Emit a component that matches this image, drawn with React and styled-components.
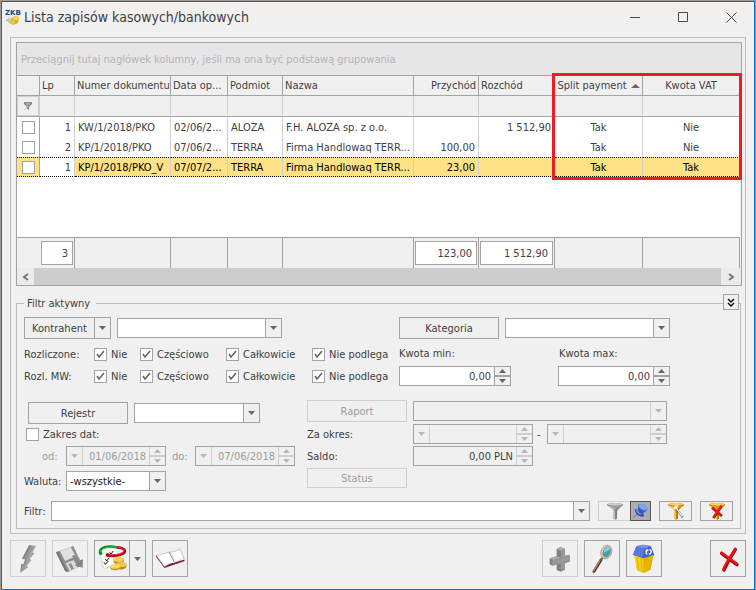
import React, { useState } from "react";
import styled, { createGlobalStyle } from "styled-components";

const colors = {
    frame: "#0072c0",
    face: "#f0f0f0",
    line: "#a3a3a3",
    softLine: "#cfcfcf",
    panelLine: "#bcbcbc",
    text: "#404040",
    disabled: "#9c9c9c",
    arrow: "#666666",
    arrowOff: "#b8b8b8",
    selected: "#ffe285",
    mark: "#ed1c24",
};

const GlobalStyle = createGlobalStyle`
    *, *::before, *::after {
        box-sizing: border-box;
    }

    body {
        margin: 0;
        padding: 1px 1px 0;
        background: #9b9b9b;
        color: ${colors.text};
        font-family: Tahoma, "DejaVu Sans Condensed", "Noto Sans", sans-serif;
        font-size: 11px;
        line-height: 15px;
    }

    button, input, select {
        margin: 0;
        padding: 0;
        border-radius: 0;
        color: inherit;
        font: inherit;
    }

    svg {
        display: block;
        flex: none;
    }
`;

/* window */

const Window = styled.div`
    padding: 0 8px 12px;
    border: 1px solid ${colors.frame};
    background: ${colors.face};
`;

const TitleBar = styled.header`
    display: flex;
    align-items: center;
    height: 35px;
    padding-bottom: 5px;
    margin-left: -5px;
`;

const Title = styled.h1`
    flex: 1;
    margin: 0 0 0 3px;
    font-size: 14px;
    font-weight: normal;
    line-height: 20px;
    white-space: nowrap;
`;

const WindowButton = styled.button`
    display: flex;
    align-items: center;
    justify-content: center;
    width: 48px;
    height: 30px;
    border: 0;
    background: none;

    &:last-child {
        margin-right: -9px;
    }
`;

const Panel = styled.main`
    padding: 4px 3px 4px 5px;
    border: 1px solid ${colors.panelLine};
`;

/* grid with documents */

const Grid = styled.section`
    position: relative;
    border: 1px solid ${colors.line};
`;

const GroupPanel = styled.div`
    height: 33px;
    padding: 9px 4px;
    border-bottom: 1px solid ${colors.line};
    background: #e6e6e6;
    color: #b4b4b4;
`;

const Table = styled.table`
    width: 100%;
    padding-right: 1px;
    border-collapse: separate;
    border-spacing: 0;
    table-layout: fixed;
`;

const Column = styled.col`
    width: ${({ $width }) => ($width ? `${$width}px` : "auto")};
`;

const HeadCell = styled.th`
    height: 20px;
    padding: 0 2px;
    overflow: hidden;
    border-right: 1px solid ${colors.line};
    border-bottom: 1px solid ${colors.line};
    font-weight: normal;
    text-align: ${({ $align }) => $align || "left"};
    white-space: nowrap;
`;

const SortLabel = styled.span`
    display: flex;
    align-items: center;
    justify-content: center;
    gap: 4px;
`;

const FilterCell = styled.td`
    height: 21px;
    padding: 0;
    border-right: 1px solid ${colors.softLine};
    border-bottom: 1px solid ${colors.line};
`;

const FilterMark = styled.span`
    display: flex;
    align-items: center;
    justify-content: center;
    height: 20px;
    border: 1px solid ${colors.softLine};
`;

const Cell = styled.td`
    height: 20px;
    padding: 0 3px;
    overflow: hidden;
    border-right: 1px solid ${colors.softLine};
    background: ${({ $selected }) => ($selected ? colors.selected : "#ffffff")};
    color: ${({ $selected }) => ($selected ? "#000000" : "inherit")};
    text-align: ${({ $align }) => $align || "left"};
    white-space: nowrap;
`;

const CheckCell = styled(Cell)`
    padding: 0 0 0 5px;
    border-right-color: ${colors.line};
`;

const Row = styled.tr`
    td {
        border-top: ${({ $selected }) => ($selected ? "1px dotted #000" : "0")};
        border-bottom: ${({ $selected }) => ($selected ? "1px dotted #000" : "0")};
    }
`;

const EmptyCell = styled.td`
    height: 60px;
    padding: 0;
    background: #ffffff;
`;

const SumCell = styled.td`
    height: 31px;
    padding: 0 1px;
    border-top: 1px solid ${colors.line};
    border-right: ${({ $open }) => ($open ? "0" : `1px solid ${colors.line}`)};
`;

const Sum = styled.output`
    display: block;
    height: 24px;
    padding: 4px;
    border: 1px solid ${colors.line};
    background: #ffffff;
    text-align: right;
`;

const ScrollBar = styled.div`
    display: flex;
    height: 17px;
`;

const ScrollButton = styled.button`
    display: flex;
    align-items: center;
    justify-content: center;
    width: ${({ $width }) => $width}px;
    border: 0;
    background: #ebebeb;
`;

const ScrollThumb = styled.div`
    flex: 1;
    background: #cdcdcd;
`;

const Highlight = styled.div`
    position: absolute;
    top: 30px;
    right: -1px;
    width: 190px;
    height: 107px;
    border: 3px solid ${colors.mark};
    pointer-events: none;
`;

/* filter form */

const FilterSection = styled.section`
    position: relative;
    padding: 10px 1px 0 0;
`;

const Fieldset = styled.fieldset`
    min-width: 0;
    margin: 0;
    padding: 6px 7px 7px;
    border: 1px solid ${colors.panelLine};
`;

const Legend = styled.legend`
    height: 15px;
    padding: 0 6px 0 3px;
`;

const CollapseButton = styled.button`
    position: absolute;
    top: 8px;
    right: 3px;
    display: flex;
    align-items: center;
    justify-content: center;
    width: 16px;
    height: 16px;
    border: 1px solid ${colors.line};
    background: ${colors.face};
`;

const Upper = styled.div`
    display: grid;
    grid-template-columns: 375px 1fr;
`;

const Lower = styled.div`
    display: grid;
    grid-template-columns: 283px 1fr;
    margin-top: 13px;
`;

const Stack = styled.div`
    display: grid;
    grid-template-rows: ${({ $rows }) => $rows};
    padding-top: ${({ $top }) => $top || 0}px;
`;

const Line = styled.div`
    display: flex;
    align-items: center;
    align-self: start;
    gap: ${({ $gap }) => $gap || 0}px;
    height: ${({ $height }) => $height || 20}px;
    padding-left: ${({ $indent }) => $indent || 0}px;
    white-space: nowrap;
`;

const Caption = styled.label`
    flex: none;
    width: ${({ $width }) => ($width ? `${$width}px` : "auto")};
    padding-left: ${({ $indent }) => $indent || 0}px;
    color: ${({ $off }) => ($off ? colors.disabled : "inherit")};
    white-space: nowrap;
`;

const CheckRow = styled.div`
    display: grid;
    grid-template-columns: 70px 46px 86px 86px 1fr;
    align-items: center;
    height: 22px;
`;

const CheckLabel = styled.label`
    display: flex;
    align-items: center;
    gap: 4px;
    white-space: nowrap;
`;

const Tick = styled.span`
    display: grid;
    width: 13px;
    height: 13px;

    input {
        grid-area: 1 / 1;
        width: 13px;
        height: 13px;
        border: 1px solid ${colors.line};
        background: #ffffff;
        appearance: none;
    }

    svg {
        grid-area: 1 / 1;
        pointer-events: none;
    }
`;

const Button = styled.button`
    flex: none;
    width: 100px;
    height: ${({ $height }) => $height || 22}px;
    border: 1px solid ${colors.line};
    background: ${colors.face};
    text-align: center;

    &:disabled {
        border-color: ${colors.softLine};
        color: ${colors.disabled};
    }
`;

const SplitBox = styled.div`
    display: flex;
    flex: none;
    height: ${({ $height }) => $height}px;
    border: 1px solid ${colors.line};
`;

const SplitMain = styled.button`
    display: flex;
    align-items: center;
    justify-content: center;
    width: ${({ $width }) => $width}px;
    border: 0;
    background: none;
`;

const SplitArrow = styled.button`
    display: flex;
    align-items: center;
    justify-content: center;
    width: 16px;
    border: 0;
    border-left: 1px solid ${colors.line};
    background: none;
`;

const ComboBox = styled.div`
    display: grid;
    flex: ${({ $width }) => ($width ? "none" : "1")};
    width: ${({ $width }) => ($width ? `${$width}px` : "auto")};
    height: 20px;
    border: 1px solid ${colors.line};
    background: ${({ $off }) => ($off ? colors.face : "#ffffff")};

    select {
        grid-area: 1 / 1;
        width: 100%;
        min-width: 0;
        padding: 0 20px 0 3px;
        border: 0;
        background: none;
        color: #202020;
        appearance: none;
        opacity: 1;
    }
`;

const ComboArrow = styled.span`
    grid-area: 1 / 1;
    justify-self: end;
    display: flex;
    align-items: center;
    justify-content: center;
    width: 16px;
    border-left: 1px solid ${({ $off }) => ($off ? colors.softLine : colors.line)};
    background: ${colors.face};
    pointer-events: none;
`;

const Field = styled.div`
    display: flex;
    flex: none;
    width: ${({ $width }) => $width}px;
    height: 20px;
    border: 1px solid ${colors.line};
    background: ${({ $off }) => ($off ? colors.face : "#ffffff")};

    input {
        flex: 1;
        min-width: 0;
        padding: 0 3px;
        border: 0;
        background: none;
        color: ${({ $dim }) => ($dim ? colors.disabled : colors.text)};
        text-align: right;
    }
`;

const FieldDrop = styled.button`
    display: flex;
    align-items: center;
    justify-content: center;
    width: 16px;
    border: 0;
    border-right: 1px solid ${colors.softLine};
    background: none;
`;

const Spinner = styled.span`
    display: grid;
    grid-template-rows: 1fr 1fr;
    width: 16px;
    border-left: 1px solid ${({ $off }) => ($off ? colors.softLine : colors.line)};
    background: ${colors.face};

    button {
        display: flex;
        align-items: center;
        justify-content: center;
        border: 0;
        background: none;
    }

    button:first-child {
        border-bottom: 1px solid ${({ $off }) => ($off ? colors.softLine : colors.line)};
    }

    button:last-child {
        border-top: 1px solid ${({ $off }) => ($off ? colors.softLine : colors.line)};
    }
`;

const FilterLine = styled.div`
    display: flex;
    align-items: center;
    gap: 8px;
    height: 20px;
    margin-top: 10px;
`;

const FilterInput = styled.div`
    display: flex;
    flex: 1;
    align-items: center;
`;

const ButtonPair = styled.div`
    display: flex;
`;

const SmallButton = styled.button`
    display: flex;
    align-items: center;
    justify-content: center;
    width: ${({ $width }) => $width || 33}px;
    height: 20px;
    border: 1px solid ${({ $pressed }) => ($pressed ? "#555555" : colors.line)};
    background: ${({ $pressed }) => ($pressed ? "#adadad" : colors.face)};

    &:disabled {
        border-color: ${colors.softLine};
        border-right: 0;
    }
`;

/* bottom toolbar */

const Toolbar = styled.footer`
    display: flex;
    gap: 6px;
    padding-top: 6px;
`;

const ToolButton = styled.button`
    display: flex;
    align-items: center;
    justify-content: center;
    width: 36px;
    height: 37px;
    border: 1px solid ${colors.line};
    background: ${colors.face};

    &:disabled {
        border-color: ${colors.softLine};
    }
`;

const ToolGroup = styled.div`
    display: flex;
    gap: 6px;
    margin-left: ${({ $left }) => $left};
`;

/* drawings */

const Triangle = ({ up, off, width = 7 }) => (
    <svg width={width} height="4" viewBox="0 0 8 4" preserveAspectRatio="none">
        <path
            d={up ? "M4 0L8 4H0Z" : "M0 0H8L4 4Z"}
            fill={off ? colors.arrowOff : colors.arrow}
        />
    </svg>
);

const AppIcon = () => (
    <svg width="16" height="17" viewBox="0 0 16 17">
        <text x="0" y="6" fontSize="7" fontWeight="bold" fontFamily="DejaVu Sans" fill="#154a8c">
            ZKB
        </text>
        <path d="M0 11L5 8L9 9L5 14Z" fill="#d8dce0" />
        <path d="M1 12L4 10M3 13L6 11" stroke="#9aa4b0" />
        <path d="M6 10L10 7L14 9L13 14L8 16L5 13Z" fill="#e3ad2a" />
        <ellipse cx="11" cy="9" rx="3" ry="2" fill="#f7d255" />
        <ellipse cx="7" cy="13" rx="3" ry="2" fill="#f2c43e" />
    </svg>
);

const FunnelMark = () => (
    <svg width="10" height="9" viewBox="0 0 10 9">
        <path d="M1 0H9V2L6 5V8L4 7V5L1 2Z" fill="#8b8b8b" />
        <path d="M1 8L5 4M3 2H7" stroke="#c4c4c4" />
    </svg>
);

const BoltIcon = () => (
    <svg width="34" height="34" viewBox="0 0 102 102">
        <path
            d="M55 9L75 12L64 32L71 34L55 51L61 54L47 72L51 76L28 92L31 65L37 68L43 52L33 50Z"
            fill="#9a9a9a"
        />
        <path d="M55 9L60 12L40 48L48 51L38 72L34 70L28 92L31 65L37 68L43 52L33 50Z" fill="#858585" />
        <path d="M74 13L57 36L63 37L47 54L53 56L42 74" fill="none" stroke="#b2b2b2" strokeWidth="3" />
    </svg>
);

const SaveIcon = () => (
    <svg width="34" height="34" viewBox="0 0 102 102">
        <path d="M9 31L61 12L88 70L43 91L36 86Z" fill="#8e8e8e" />
        <path d="M9 31L14 28L43 86L43 91L36 86Z" fill="#777777" />
        <path d="M21 27L53 15L68 43L36 57Z" fill="#e0e0e0" />
        <path d="M38 64L62 54L74 77L50 87Z" fill="#dcdcdc" />
        <path d="M46 66L54 63L63 80L55 83Z" fill="#8e8e8e" />
        <path d="M56 43C66 34 78 40 81 55L90 52L89 77L66 71L73 63C72 53 65 46 56 43Z" fill="#868686" />
        <path d="M57 43C67 37 76 44 79 58" fill="none" stroke="#a9a9a9" strokeWidth="3" />
    </svg>
);

const PaymentsIcon = () => (
    <svg width="34" height="34" viewBox="0 0 102 102">
        <path d="M13 31L70 18L84 66L26 78Z" fill="#fafafa" />
        <path d="M13 34L26 79L62 72" fill="none" stroke="#c3c7cc" strokeWidth="2" />
        <path d="M31 51L35 57L43 47M27 61L31 67L40 57M44 31L48 36L55 27" fill="none" stroke="#1c1c1c" strokeWidth="3" />
        <path d="M15 34C12 15 40 10 66 16" fill="none" stroke="#07851b" strokeWidth="7" />
        <path d="M17 31C16 18 43 13 65 15" fill="none" stroke="#33c443" strokeWidth="3" />
        <circle cx="17" cy="34" r="5" fill="#118d22" />
        <path d="M65 16C89 17 96 28 84 35C72 42 50 43 39 40" fill="none" stroke="#b70914" strokeWidth="8" />
        <path d="M66 15C86 18 91 27 81 32C70 38 52 39 40 37" fill="none" stroke="#f23c42" strokeWidth="3" />
        <circle cx="38" cy="39" r="6" fill="#c80713" />
        <path d="M56 53V61C60 70 84 68 87 58V50Z" fill="#b88c1e" />
        <ellipse cx="71" cy="52" rx="17" ry="8" fill="#f2d15b" />
        <path d="M64 68V76C67 85 91 84 94 74V67Z" fill="#b68516" />
        <ellipse cx="79" cy="68" rx="16" ry="8" fill="#edc849" />
        <path d="M46 73V79C50 88 72 86 75 78V72Z" fill="#c59426" />
        <ellipse cx="60" cy="73" rx="15" ry="7" fill="#f5d868" />
    </svg>
);

const BookIcon = () => (
    <svg width="34" height="34" viewBox="0 0 102 102">
        <path d="M8 43L34 78L96 57L89 50L36 68L11 38Z" fill="#7c2331" />
        <path d="M10 40C22 39 37 34 48 30L65 62C55 62 43 67 34 74Z" fill="#ffffff" />
        <path d="M48 30C59 32 71 25 82 21L94 53C84 54 73 58 65 62Z" fill="#fbfbfb" />
        <path d="M48 30L65 62" stroke="#8c8c8c" strokeWidth="3" />
        <path d="M52 30L69 59L94 50" fill="none" stroke="#d2d2d2" strokeWidth="2" />
        <path d="M10 40C22 39 37 34 48 30C59 32 71 25 82 21L94 53M10 40L34 74" fill="none" stroke="#b3abad" strokeWidth="2" />
    </svg>
);

const PlusIcon = () => (
    <svg width="34" height="34" viewBox="0 0 102 102">
        <path d="M41 21L52 15L66 20V41L80 38V59L66 64V83L53 89L41 84V68L27 71L20 66V49L41 43Z" fill="#818181" />
        <path d="M41 21L52 15L66 20L54 26ZM20 49L41 43L54 47L28 54Z" fill="#adadad" />
        <path d="M54 26L66 20V41L80 38V57L66 61V81L54 86V65L28 69V54L54 47Z" fill="#999999" />
    </svg>
);

const MagnifierIcon = () => (
    <svg width="34" height="34" viewBox="0 0 102 102">
        <path d="M27 88L48 54" stroke="#5c3426" strokeWidth="9" strokeLinecap="round" />
        <path d="M26 86L46 54" stroke="#c08a74" strokeWidth="4" strokeLinecap="round" />
        <path d="M46 57L55 44" stroke="#555d61" strokeWidth="5" />
        <ellipse cx="64" cy="30" rx="16" ry="21" transform="rotate(20 64 30)" fill="#e8dcb8" stroke="#8a7f60" strokeWidth="2" />
        <ellipse cx="65" cy="30" rx="12" ry="17" transform="rotate(20 65 30)" fill="#4b9bae" />
        <path d="M56 33C56 19 67 12 74 18C76 27 66 24 56 33Z" fill="#93ced9" />
    </svg>
);

const BinIcon = () => (
    <svg width="34" height="34" viewBox="0 0 102 102">
        <path d="M22 38L50 47L80 36L70 83L50 93L30 84Z" fill="#d9a800" />
        <path d="M22 39L50 47V93L30 84Z" fill="#f5cf19" />
        <path d="M50 47L80 37L70 83L50 93Z" fill="#e4b500" />
        <path d="M30 45L36 85M42 48L45 88" stroke="#cda100" strokeWidth="2" />
        <path d="M28 13L47 8L71 12L82 38L50 49L18 38Z" fill="#3f5fc4" />
        <path d="M28 13L47 8L71 12L52 20Z" fill="#7695ed" />
        <path d="M28 14L52 20L49 46L18 38Z" fill="#5878dd" />
        <path d="M62 24C55 24 56 35 61 37M67 22C75 23 74 34 68 36" fill="none" stroke="#ffffff" strokeWidth="4" />
        <path d="M59 20L66 25L59 29ZM70 32L70 40L64 35Z" fill="#ffffff" />
    </svg>
);

const CloseIcon = () => (
    <svg width="34" height="34" viewBox="0 0 102 102">
        <path d="M73 22C62 41 51 57 39 84M32 34C46 45 61 55 78 68" fill="none" stroke="#8e0909" strokeWidth="10" strokeLinecap="round" />
        <path d="M72 22C60 41 49 56 37 81M31 32C45 43 60 52 76 65" fill="none" stroke="#f31317" strokeWidth="7" strokeLinecap="round" />
    </svg>
);

const FunnelIcon = ({ tone, children }) => {
    const [dark, mid, light] =
        tone === "gray" ? ["#7c7c7c", "#a2a2a2", "#cfcfcf"] : ["#b87400", "#eb9b0b", "#ffd166"];
    return (
        <svg width="20" height="18" viewBox="0 0 60 54">
            <path d="M6 9C14 16 24 21 25 28V50L31 53L36 49V28C37 21 47 16 54 9Z" fill={mid} />
            <path d="M31 22L54 9C47 16 37 21 36 28V49L31 53Z" fill={dark} />
            <path d="M16 14C25 20 28 24 28 50" fill="none" stroke={light} strokeWidth="3" />
            <ellipse cx="30" cy="8" rx="24" ry="5" fill={dark} />
            <ellipse cx="30" cy="7" rx="22" ry="4" fill={light} />
            {children}
        </svg>
    );
};

const PinIcon = () => (
    <svg width="17" height="16" viewBox="0 0 51 48">
        <path d="M4 44L14 35" stroke="#555555" strokeWidth="2" />
        <path d="M8 19C15 16 35 28 36 39C29 44 10 39 8 19Z" fill="#2b4698" />
        <path d="M11 19C17 21 28 29 31 36C24 37 13 32 11 19Z" fill="#6e93ef" />
        <path d="M18 14L36 7L43 22L31 34C24 32 16 26 18 14Z" fill="#3558b8" />
        <ellipse cx="32" cy="14" rx="15" ry="10" transform="rotate(28 32 14)" fill="#3c62c7" />
        <ellipse cx="33" cy="12" rx="13" ry="8" transform="rotate(28 33 12)" fill="#7fa3f8" />
    </svg>
);

/* data */

const columns = [
    { key: "lp", title: "Lp", width: 35, align: "right", headAlign: "left", sum: "3" },
    { key: "number", title: "Numer dokumentu", width: 96 },
    { key: "date", title: "Data op...", width: 57 },
    { key: "party", title: "Podmiot", width: 55 },
    { key: "name", title: "Nazwa" },
    { key: "income", title: "Przychód", width: 65, align: "right", sum: "123,00" },
    { key: "expense", title: "Rozchód", width: 76, align: "right", headAlign: "left", sum: "1 512,90" },
    { key: "split", title: "Split payment", width: 88, align: "center", sorted: true },
    { key: "vat", title: "Kwota VAT", width: 97, align: "center" },
];

const rows = [
    {
        lp: "1",
        number: "KW/1/2018/PKO",
        date: "02/06/2...",
        party: "ALOZA",
        name: "F.H. ALOZA sp. z o.o.",
        expense: "1 512,90",
        split: "Tak",
        vat: "Nie",
    },
    {
        lp: "2",
        number: "KP/1/2018/PKO",
        date: "07/06/2...",
        party: "TERRA",
        name: "Firma Handlowaq TERR...",
        income: "100,00",
        split: "Tak",
        vat: "Nie",
    },
    {
        lp: "1",
        number: "KP/1/2018/PKO_V",
        date: "07/07/2...",
        party: "TERRA",
        name: "Firma Handlowaq TERR...",
        income: "23,00",
        split: "Tak",
        vat: "Tak",
        selected: true,
    },
];

const statuses = ["Nie", "Częściowo", "Całkowicie", "Nie podlega"];

/* controls */

const CheckBox = ({ label, initial }) => {
    const [checked, setChecked] = useState(Boolean(initial));
    return (
        <CheckLabel>
            <Tick>
                <input
                    type="checkbox"
                    checked={checked}
                    onChange={() => setChecked(!checked)}
                />
                {checked && (
                    <svg width="13" height="13" viewBox="0 0 13 13">
                        <path d="M3 6L5 9L10 3" fill="none" stroke="#606060" strokeWidth="1.5" />
                    </svg>
                )}
            </Tick>
            {label}
        </CheckLabel>
    );
};

const Combo = ({ id, title, width, off, value }) => (
    <ComboBox $width={width} $off={off}>
        <select id={id} aria-label={title} disabled={off}>
            <option>{value || ""}</option>
        </select>
        <ComboArrow $off={off}>
            <Triangle off={off} />
        </ComboArrow>
    </ComboBox>
);

const SpinField = ({ id, title, width, off, dim, drop, value }) => (
    <Field $width={width} $off={off} $dim={dim}>
        {drop && (
            <FieldDrop disabled={off} aria-label="Kalendarz">
                <Triangle off={off} />
            </FieldDrop>
        )}
        <input id={id} type="text" aria-label={title} defaultValue={value} disabled={off} />
        <Spinner $off={off}>
            <button disabled={off} aria-label="Zwiększ">
                <Triangle up off={off} />
            </button>
            <button disabled={off} aria-label="Zmniejsz">
                <Triangle off={off} />
            </button>
        </Spinner>
    </Field>
);

const DocumentGrid = () => (
    <Grid>
        <GroupPanel>
            Przeciągnij tutaj nagłówek kolumny, jeśli ma ona być podstawą grupowania
        </GroupPanel>
        <Table>
            <colgroup>
                <Column $width={23} />
                {columns.map(({ key, width }) => (
                    <Column key={key} $width={width} />
                ))}
            </colgroup>
            <thead>
                <tr>
                    <HeadCell />
                    {columns.map(({ key, title, align, headAlign, sorted }) => (
                        <HeadCell key={key} $align={headAlign || align}>
                            {sorted ? (
                                <SortLabel>
                                    {title}
                                    <Triangle up width={9} />
                                </SortLabel>
                            ) : (
                                title
                            )}
                        </HeadCell>
                    ))}
                </tr>
            </thead>
            <tbody>
                <tr>
                    <FilterCell>
                        <FilterMark>
                            <FunnelMark />
                        </FilterMark>
                    </FilterCell>
                    {columns.map(({ key }) => (
                        <FilterCell key={key} />
                    ))}
                </tr>
                {rows.map((row) => (
                    <Row key={row.number} $selected={row.selected}>
                        <CheckCell $selected={row.selected}>
                            <Tick>
                                <input type="checkbox" aria-label={row.number} />
                            </Tick>
                        </CheckCell>
                        {columns.map(({ key, align }) => (
                            <Cell
                                key={key}
                                $align={align}
                                $selected={row.selected && key !== "lp"}
                            >
                                {row[key]}
                            </Cell>
                        ))}
                    </Row>
                ))}
                <tr>
                    <EmptyCell colSpan={columns.length + 1} />
                </tr>
            </tbody>
            <tfoot>
                <tr>
                    <SumCell $open />
                    {columns.map(({ key, sum }) => (
                        <SumCell key={key}>{sum && <Sum>{sum}</Sum>}</SumCell>
                    ))}
                </tr>
            </tfoot>
        </Table>
        <ScrollBar>
            <ScrollButton $width={17} aria-label="W lewo">
                <svg width="7" height="8" viewBox="0 0 7 8">
                    <path d="M6 1L2 4L6 7" fill="none" stroke="#777777" strokeWidth="2" />
                </svg>
            </ScrollButton>
            <ScrollThumb />
            <ScrollButton $width={20} aria-label="W prawo">
                <svg width="7" height="8" viewBox="0 0 7 8">
                    <path d="M1 1L5 4L1 7" fill="none" stroke="#777777" strokeWidth="2" />
                </svg>
            </ScrollButton>
        </ScrollBar>
        <Highlight />
    </Grid>
);

const StatusChecks = ({ label }) => (
    <CheckRow>
        <span>{label}</span>
        {statuses.map((status) => (
            <CheckBox key={status} label={status} initial />
        ))}
    </CheckRow>
);

const FilterForm = () => (
    <FilterSection>
        <Fieldset>
            <Legend>Filtr aktywny</Legend>
            <Upper>
                <Stack $rows="26px 22px 22px">
                    <Line $height={22} $gap={6}>
                        <SplitBox $height={22}>
                            <SplitMain $width={69}>Kontrahent</SplitMain>
                            <SplitArrow aria-label="Rodzaj">
                                <Triangle />
                            </SplitArrow>
                        </SplitBox>
                        <Combo title="Kontrahent" width={165} />
                    </Line>
                    <StatusChecks label="Rozliczone:" />
                    <StatusChecks label="Rozl. MW:" />
                </Stack>
                <Stack $rows="26px 22px 22px">
                    <Line $height={22} $gap={6}>
                        <Button>Kategoria</Button>
                        <Combo title="Kategoria" width={165} />
                    </Line>
                    <Line>
                        <Caption htmlFor="min" $width={160}>
                            Kwota min:
                        </Caption>
                        <Caption htmlFor="max">Kwota max:</Caption>
                    </Line>
                    <Line $height={22} $gap={47}>
                        <SpinField id="min" width={112} value="0,00" />
                        <SpinField id="max" width={112} value="0,00" />
                    </Line>
                </Stack>
            </Upper>
            <Lower>
                <Stack $rows="22px 22px 25px 20px" $top={2}>
                    <Line $height={22} $gap={6} $indent={4}>
                        <Button>Rejestr</Button>
                        <Combo title="Rejestr" width={126} />
                    </Line>
                    <Line $indent={2}>
                        <CheckBox label="Zakres dat:" />
                    </Line>
                    <Line>
                        <Caption htmlFor="from" $width={42} $indent={18} $off>
                            od:
                        </Caption>
                        <SpinField id="from" width={100} drop off dim value="01/06/2018" />
                        <Caption htmlFor="to" $width={29} $indent={6} $off>
                            do:
                        </Caption>
                        <SpinField id="to" width={100} drop off dim value="07/06/2018" />
                    </Line>
                    <Line>
                        <Caption htmlFor="currency" $width={42}>
                            Waluta:
                        </Caption>
                        <Combo id="currency" width={100} value="-wszystkie-" />
                    </Line>
                </Stack>
                <Stack $rows="24px 22px 22px 20px">
                    <Line $height={22} $gap={6}>
                        <Button disabled>Raport</Button>
                        <Combo title="Raport" width={254} off />
                    </Line>
                    <Line>
                        <Caption htmlFor="period" $width={106}>
                            Za okres:
                        </Caption>
                        <SpinField id="period" width={120} drop off />
                        <Caption as="span" $width={14} $indent={4}>
                            -
                        </Caption>
                        <SpinField title="Koniec okresu" width={120} drop off />
                    </Line>
                    <Line>
                        <Caption htmlFor="balance" $width={106}>
                            Saldo:
                        </Caption>
                        <SpinField id="balance" width={120} off value="0,00 PLN" />
                    </Line>
                    <Button $height={20} disabled>
                        Status
                    </Button>
                </Stack>
            </Lower>
            <FilterLine>
                <FilterInput>
                    <Caption htmlFor="filter" $width={27}>
                        Filtr:
                    </Caption>
                    <Combo id="filter" />
                </FilterInput>
                <ButtonPair>
                    <SmallButton $width={32} disabled aria-label="Filtruj">
                        <FunnelIcon tone="gray" />
                    </SmallButton>
                    <SmallButton $width={21} $pressed aria-label="Przypnij">
                        <PinIcon />
                    </SmallButton>
                </ButtonPair>
                <SmallButton aria-label="Kreator filtra">
                    <FunnelIcon>
                        <path d="M28 14L50 46" stroke="#555555" strokeWidth="6" />
                        <path d="M27 12L49 44M22 20L34 12M33 10V22" stroke="#f7f7f7" strokeWidth="4" />
                    </FunnelIcon>
                </SmallButton>
                <SmallButton aria-label="Usuń filtr">
                    <FunnelIcon>
                        <path d="M15 17L45 42M44 12L19 48" stroke="#a30b0b" strokeWidth="8" />
                        <path d="M15 16L44 40M43 12L19 46" stroke="#ee1c1c" strokeWidth="5" />
                    </FunnelIcon>
                </SmallButton>
            </FilterLine>
        </Fieldset>
        <CollapseButton aria-label="Zwiń filtr">
            <svg width="8" height="9" viewBox="0 0 8 9">
                <path d="M1 1L4 4L7 1M1 5L4 8L7 5" fill="none" stroke="#111111" strokeWidth="1.5" />
            </svg>
        </CollapseButton>
    </FilterSection>
);

const App = () => (
    <>
        <GlobalStyle />
        <Window>
            <TitleBar>
                <AppIcon />
                <Title>Lista zapisów kasowych/bankowych</Title>
                <WindowButton aria-label="Minimalizuj">
                    <svg width="10" height="10" viewBox="0 0 10 10">
                        <path d="M0 5.5H10" stroke="#4a4a4a" />
                    </svg>
                </WindowButton>
                <WindowButton aria-label="Maksymalizuj">
                    <svg width="10" height="10" viewBox="0 0 10 10">
                        <path d="M.5 .5H9.5V9.5H.5Z" fill="none" stroke="#4a4a4a" />
                    </svg>
                </WindowButton>
                <WindowButton aria-label="Zamknij okno">
                    <svg width="11" height="11" viewBox="0 0 11 11">
                        <path d="M.5 .5L10.5 10.5M10.5 .5L.5 10.5" stroke="#4a4a4a" />
                    </svg>
                </WindowButton>
            </TitleBar>
            <Panel>
                <DocumentGrid />
                <FilterForm />
            </Panel>
            <Toolbar>
                <ToolButton disabled aria-label="Wykonaj">
                    <BoltIcon />
                </ToolButton>
                <ToolButton disabled aria-label="Zapisz">
                    <SaveIcon />
                </ToolButton>
                <SplitBox $height={37}>
                    <SplitMain $width={34} aria-label="Rozliczenia">
                        <PaymentsIcon />
                    </SplitMain>
                    <SplitArrow aria-label="Więcej">
                        <Triangle />
                    </SplitArrow>
                </SplitBox>
                <ToolButton aria-label="Księguj">
                    <BookIcon />
                </ToolButton>
                <ToolGroup $left="auto">
                    <ToolButton disabled aria-label="Dodaj">
                        <PlusIcon />
                    </ToolButton>
                    <ToolButton aria-label="Podgląd">
                        <MagnifierIcon />
                    </ToolButton>
                    <ToolButton aria-label="Usuń">
                        <BinIcon />
                    </ToolButton>
                </ToolGroup>
                <ToolGroup $left="42px">
                    <ToolButton aria-label="Zamknij">
                        <CloseIcon />
                    </ToolButton>
                </ToolGroup>
            </Toolbar>
        </Window>
    </>
);

export default App;
